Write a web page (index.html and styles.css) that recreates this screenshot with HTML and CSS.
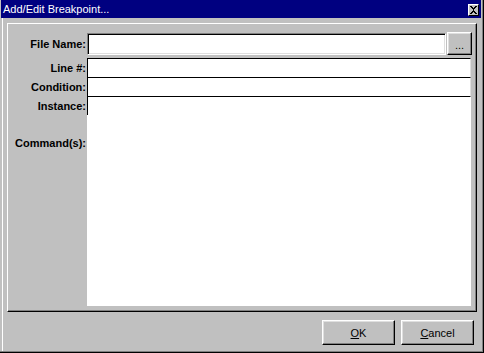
FILE: index.html
```html
<!DOCTYPE html>
<html lang="en">
<head>
    <meta charset="UTF-8">
    <title>Add/Edit Breakpoint...</title>
    <link rel="stylesheet" href="styles.css">
</head>
<body>
    <div class="window">
        <div class="titlebar">
            <span class="title">Add/Edit Breakpoint...</span>
            <span class="close-btn">
                <svg width="9" height="8" viewBox="0 0 9 8">
                    <path d="M1 0h2v1h1v1h1V1h1V0h2v1H7v1H6v1H5v2h1v1h1v1h1v1H6V7H5V6H4v1H3v1H1V7h1V6h1V5h1V3H3V2H2V1H1z" fill="#000"/>
                </svg>
            </span>
        </div>
        <div class="client">
            <div class="panel">
                <div class="row file-row">
                    <label class="label">File Name:</label>
                    <div class="file-field">
                        <div class="input file-input"></div>
                        <div class="btn browse-btn">...</div>
                    </div>
                </div>
                <div class="row">
                    <label class="label">Line #:</label>
                    <div class="input flat"></div>
                </div>
                <div class="row">
                    <label class="label">Condition:</label>
                    <div class="input flat"></div>
                </div>
                <div class="row">
                    <label class="label">Instance:</label>
                    <div class="input flat instance"></div>
                </div>
                <div class="row commands-row">
                    <label class="label commands-label">Command(s):</label>
                    <div class="commands"></div>
                </div>
            </div>
            <div class="actions">
                <div class="btn action-btn"><u>O</u>K</div>
                <div class="btn action-btn"><u>C</u>ancel</div>
            </div>
        </div>
    </div>
</body>
</html>
```

FILE: styles.css
```css
* {
    box-sizing: border-box;
}
body {
    margin: 0;
    font-family: "Liberation Sans", Arial, sans-serif;
    font-size: 11px;
    color: #000;
    background: #c0c0c0;
}
.window {
    width: 484px;
    height: 353px;
    display: flex;
    flex-direction: column;
    background: #c0c0c0;
    padding: 0 2px 2px 0;
    box-shadow: inset -1px -1px #000, inset -2px -2px #808080;
}
.titlebar {
    height: 18px;
    margin: 0 1px;
    background: #000080;
    color: #fff;
    display: flex;
    align-items: flex-start;
    padding-left: 2px;
}
.title {
    line-height: 18px;
    flex: 1;
}
.close-btn {
    width: 11px;
    height: 12px;
    margin: 4px 2px 0 0;
    background: #c0c0c0;
    border: 1px solid;
    border-color: #fff #000 #000 #fff;
    display: flex;
    align-items: center;
    justify-content: center;
}
.close-btn svg {
    display: block;
}
.client {
    flex: 1;
    margin-left: 2px;
    border-left: 1px solid #fff;
    padding: 5px 0 0 4px;
    display: flex;
    flex-direction: column;
}
.panel {
    width: 470px;
    height: 289px;
    border: 1px solid;
    border-color: #fff #000 #000 #fff;
    box-shadow: inset -1px -1px #808080;
    padding: 8px 3px 4px 0;
    display: flex;
    flex-direction: column;
}
.row {
    display: grid;
    grid-template-columns: 79px 1fr;
    align-items: center;
    height: 19px;
}
.file-row {
    height: 23px;
    margin-bottom: 3px;
}
.label {
    font-weight: bold;
    text-align: right;
    padding-right: 1px;
    white-space: nowrap;
}
.file-field {
    display: flex;
    align-items: flex-start;
    height: 23px;
}
.input {
    background: #fff;
}
.file-input {
    width: 359px;
    height: 22px;
    margin-top: 1px;
    margin-right: 1px;
    border: 1px solid;
    border-color: #808080 #fff #fff #808080;
    box-shadow: inset 1px 1px #000, inset -1px -1px #dfdfdf;
}
.flat {
    height: 19px;
    margin-right: 2px;
    border-top: 1px solid #000;
    border-left: 1px solid #000;
    border-right: 1px solid #dfdfdf;
}
.instance {
    border-right: 1px solid #fff;
}
.btn {
    background: #c0c0c0;
    border: 1px solid;
    border-color: #fff #000 #000 #fff;
    box-shadow: inset -1px -1px #808080, inset 1px 1px #dfdfdf;
    display: flex;
    align-items: center;
    justify-content: center;
}
.browse-btn {
    width: 25px;
    height: 23px;
    padding-top: 2px;
}
.commands-row {
    height: 191px;
    align-items: stretch;
}
.commands-label {
    padding-top: 22px;
}
.commands {
    background: #fff;
    margin-right: 2px;
}
.actions {
    display: flex;
    justify-content: flex-end;
    gap: 6px;
    padding: 8px 8px 0 0;
}
.action-btn {
    width: 73px;
    height: 25px;
}
```
